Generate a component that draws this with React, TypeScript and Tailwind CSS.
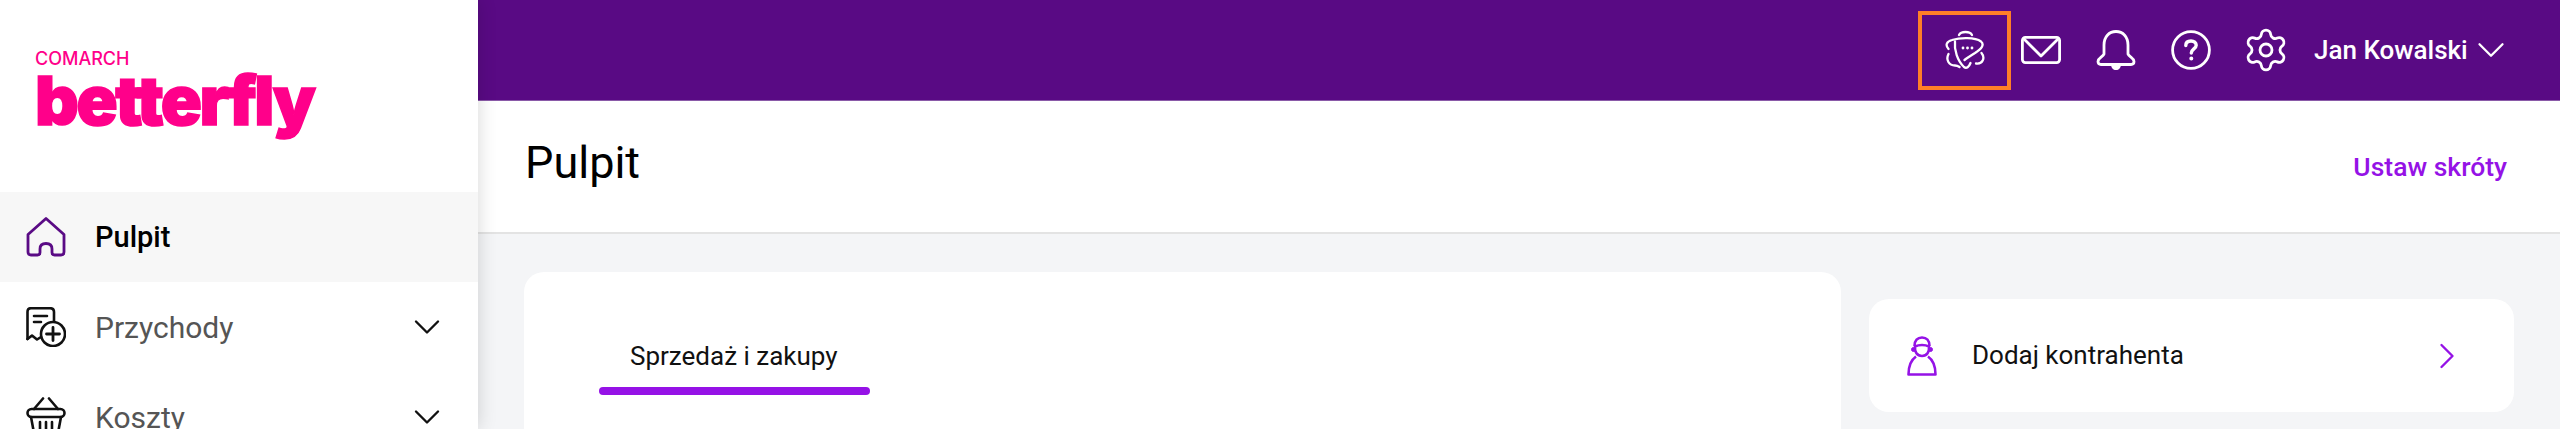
import React from 'react';
import { Settings, ChevronDown, ChevronRight } from 'lucide-react';

const AssistantIcon = () => (
  <svg viewBox="0 0 40 40" className="w-10 h-10" fill="none" stroke="white" strokeWidth="2.3" strokeLinecap="round">
    <path d="M14 5C16 1 25 1 27 5" />
    <path d="M3.5 19C0 15 1.5 11.5 7 10C15 7.5 30 7 36 11.5C40 15 36 19 30 23C26 25.5 22 28 19.5 30" />
    <path d="M10 11.5C9 20 12.5 31 19 37C21.5 39 24 37 25.5 33" />
    <path d="M36.5 23C40.5 28 37.5 34.5 31 33.5" />
    <path d="M3.5 24C0.5 30 4 35.5 10 35.5C11.5 35.5 13 36 14.5 37" />
    <circle cx="18" cy="18" r="0.7" fill="white" strokeWidth="1.4" />
    <circle cx="22.5" cy="18" r="0.7" fill="white" strokeWidth="1.4" />
    <circle cx="27" cy="18" r="0.7" fill="white" strokeWidth="1.4" />
  </svg>
);

const MailIcon = () => (
  <svg viewBox="0 0 40 28" className="w-10 h-7" fill="none" stroke="white" strokeWidth="2.8" strokeLinejoin="round" strokeLinecap="round">
    <rect x="1.4" y="1.4" width="37.2" height="25.2" rx="3" />
    <path d="M3 3L20 20L37 3" />
  </svg>
);

const BellIcon = () => (
  <svg viewBox="0 0 40 40" className="w-10 h-10" fill="none" stroke="white" strokeWidth="2.8" strokeLinejoin="round">
    <path d="M8 24V15C8 7 13 1.5 20 1.5S32 7 32 15V24C33 27 38 28 38 31.5C38 33.5 37 34.5 35 34.5H5C3 34.5 2 33.5 2 31.5C2 28 7 27 8 24Z" />
    <path d="M16.5 35C16.5 40 23.5 40 23.5 35Z" fill="white" />
  </svg>
);

const HelpIcon = () => (
  <svg viewBox="0 0 40 40" className="w-10 h-10" fill="none" stroke="white" strokeWidth="2.8" strokeLinecap="round">
    <circle cx="20" cy="20" r="18.4" />
    <path d="M14.8 15.5C14.8 12.5 17 11 20 11C23 11 25.2 12.7 25.2 15.2C25.2 18.8 20.3 19 20.3 23" strokeWidth="3.4" />
    <circle cx="20.3" cy="28.5" r="1.2" fill="white" strokeWidth="1.6" />
  </svg>
);

const HomeIcon = () => (
  <svg viewBox="0 0 40 40" className="w-10 h-10" fill="none" stroke="#5a0b85" strokeWidth="2.8" strokeLinejoin="round">
    <path d="M20 1.5L38 17.5V35C38 37 37 38 35 38H28.5C27 38 26 37 26 35.5V32C26 28 24 26.5 20 26.5S14 28 14 32V35.5C14 37 13 38 11.5 38H5C3 38 2 37 2 35V17.5Z" />
  </svg>
);

const IncomeIcon = () => (
  <svg viewBox="0 0 40 40" className="w-10 h-10" fill="none" stroke="#111" strokeWidth="2.6" strokeLinecap="round" strokeLinejoin="round">
    <path d="M1.5 32V5C1.5 2.5 3 1.2 5 1.2H24C26.5 1.2 28 2.8 28 5V14" />
    <path d="M1.5 32L6 28.5L11 32.5L15 30" />
    <path d="M8 9H21M8 15H15" />
    <circle cx="27" cy="27" r="12" />
    <path d="M27 20.5V33.5M20.5 27H33.5" strokeWidth="2.8" />
  </svg>
);

const BasketIcon = () => (
  <svg viewBox="0 0 40 40" className="w-10 h-10" fill="none" stroke="#111" strokeWidth="2.6" strokeLinecap="round" strokeLinejoin="round">
    <path d="M8 12L17 1.5M32 12L23 1.5" />
    <rect x="1.5" y="12" width="37" height="8" rx="4" />
    <path d="M5 20L8 36C8.3 37.5 9.5 38.5 11 38.5H29C30.5 38.5 31.7 37.5 32 36L35 20" />
    <path d="M14 25V33M20 25V33M26 25V33" />
  </svg>
);

const ContactIcon = () => (
  <svg viewBox="0 0 30 40" className="w-[30px] h-10" fill="none" stroke="#9512e6" strokeWidth="2.6" strokeLinejoin="round">
    <path d="M7.5 10C7.5 4.5 10.5 1.5 15 1.5S22.5 4.5 22.5 10" />
    <path d="M8 10.5C10 9.5 12 9 15 9S20 9.5 22 10.5C22.5 16 20 20 15 20S7.5 16 8 10.5Z" />
    <circle cx="6.5" cy="13.5" r="2" fill="#9512e6" strokeWidth="1" />
    <circle cx="23.5" cy="13.5" r="2" fill="#9512e6" strokeWidth="1" />
    <path d="M9 20.5C4 24 1.5 31 1.5 38.5H28.5C28.5 31 26 24 21 20.5" />
  </svg>
);

const navItems = [
  { label: 'Przychody', icon: <IncomeIcon /> },
  { label: 'Koszty', icon: <BasketIcon /> },
];

const App: React.FC = () => {
  return (
    <div className="flex w-[2560px] h-[429px] overflow-hidden bg-[#f4f5f7] font-['Roboto',sans-serif]">
      {/* Sidebar */}
      <aside className="relative z-10 w-[478px] shrink-0 bg-white shadow-[0_0_18px_rgba(0,0,0,0.16)]">
        <div className="h-[192px] pt-[50px] pl-[35px] text-[#ff008a]">
          <div className="font-['Inter',sans-serif] text-[18px] leading-[18px] font-medium">COMARCH</div>
          <div className="mt-[2px] font-['Inter',sans-serif] text-[68px] leading-[60px] font-black tracking-[-2.5px] [-webkit-text-stroke:1.5px_#ff008a]">betterfly</div>
        </div>
        <div className="flex items-center h-[90px] pl-[26px] bg-[#f7f7f7]">
          <HomeIcon />
          <span className="ml-[29px] pt-[1px] text-[29px] font-medium text-black">Pulpit</span>
        </div>
        {navItems.map((item) => (
          <div key={item.label} className="flex items-center h-[90px] pl-[26px] pr-[29px]">
            {item.icon}
            <span className="ml-[29px] text-[30px] text-[#555555]">{item.label}</span>
            <ChevronDown className="ml-auto w-[44px] h-[44px] text-[#111]" strokeWidth={1.3} />
          </div>
        ))}
      </aside>

      <main className="flex-1 min-w-0">
        {/* Top bar */}
        <header className="flex items-center h-[101px] pl-[1440px] bg-[#590a84] border-b border-[#8a5aa8] text-white">
          <div className="flex items-center justify-center w-[93px] h-[79px] border-[4px] border-[#ff7f27] mr-[10px]">
            <AssistantIcon />
          </div>
          <div className="flex items-center gap-[35px]">
            <MailIcon />
            <BellIcon />
            <HelpIcon />
            <Settings className="w-12 h-12 mx-[-4px]" strokeWidth={1.4} />
          </div>
          <span className="ml-[28px] text-[26px] font-medium">Jan Kowalski</span>
          <ChevronDown className="w-[46px] h-[46px]" strokeWidth={1.2} />
        </header>

        {/* Page title */}
        <div className="flex items-center justify-between h-[133px] pl-[47px] pr-[53px] bg-white border-b-2 border-[#e3e3e3]">
          <h1 className="mb-[7px] text-[45px] font-normal text-black">Pulpit</h1>
          <a className="text-[26.5px] font-medium text-[#9512e6]">Ustaw skróty</a>
        </div>

        {/* Content */}
        <div className="flex items-start pl-[46px] pt-[38px]">
          <section className="w-[1317px] h-[300px] pt-[67px] pl-[75px] bg-white rounded-[20px]">
            <div className="w-[271px]">
              <div className="pl-[31px] text-[26px] leading-[34px] text-[#111]">Sprzedaż i zakupy</div>
              <div className="mt-[14px] h-[8px] rounded-full bg-[#9512e6]" />
            </div>
          </section>
          <section className="flex items-center w-[645px] h-[113px] ml-[28px] mt-[27px] pl-[38px] pr-[45px] bg-white rounded-[20px]">
            <ContactIcon />
            <span className="ml-[35px] text-[26px] text-[#111]">Dodaj kontrahenta</span>
            <ChevronRight className="ml-auto w-[44px] h-[44px] text-[#9512e6]" strokeWidth={1.3} />
          </section>
        </div>
      </main>
    </div>
  );
};

export default App;
